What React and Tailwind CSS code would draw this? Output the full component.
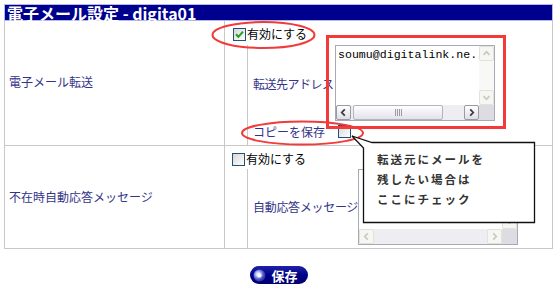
import React from 'react'

const JP = "font-['Noto_Sans_CJK_JP','Noto_Sans',sans-serif]"

function Check({ checked }) {
  return (
    <span className="inline-flex w-[13px] h-[13px] shrink-0 items-center justify-center border border-[#1c5180] bg-linear-to-br from-[#d8d8d2] to-white">
      {checked && (
        <svg width="9" height="9" viewBox="0 0 9 9">
          <path d="M1 4.3 L3.4 6.8 L8 1.6" stroke="#22a022" strokeWidth="2" fill="none" />
        </svg>
      )}
    </span>
  )
}

// scroll bar arrow button, 15x15
function SBtn({ dir, on }) {
  const pts = {
    up: '4,9 7.5,5.5 11,9',
    down: '4,6 7.5,9.5 11,6',
    left: '9,4 5.5,7.5 9,11',
    right: '6,4 9.5,7.5 6,11',
  }[dir]
  return (
    <div
      className={
        'w-[15px] h-[15px] shrink-0 rounded-[2px] border flex items-center justify-center ' +
        (on ? 'border-[#9a9aa6] bg-linear-to-b from-white to-[#dedee6]' : 'border-[#e2e2dc] bg-[#f6f6f2]')
      }
    >
      <svg width="15" height="15" viewBox="0 0 15 15">
        <polyline points={pts} fill="none" stroke={on ? '#3a3a3a' : '#cacac4'} strokeWidth="2" />
      </svg>
    </div>
  )
}

function FakeTextarea({ w, text, active }) {
  return (
    <div className={'h-[76px] border border-[#a6abb3] bg-white flex flex-col shrink-0 ' + w}>
      <div className="flex flex-1 min-h-0">
        <div className="flex-1 pl-[2px] pt-[2px] font-['Liberation_Mono',monospace] text-[11.6px] leading-[14px] text-black whitespace-nowrap overflow-hidden">
          {text}
        </div>
        <div className="w-[15px] flex flex-col bg-[#f8f8f6]">
          <SBtn dir="up" on={false} />
          <div className="flex-1" />
          <SBtn dir="down" on={false} />
        </div>
      </div>
      <div className="h-[15px] flex">
        <div className="flex-1 flex bg-[#eeeef2]">
          <SBtn dir="left" on={active} />
          {active ? (
            <div className="ml-[2px] w-[90px] h-[15px] rounded-[2px] border border-[#b4b4c0] bg-linear-to-b from-white to-[#e2e2ea] flex items-center justify-center gap-[1px]">
              <span className="w-px h-[7px] bg-[#9a9aa6]" />
              <span className="w-px h-[7px] bg-[#9a9aa6]" />
              <span className="w-px h-[7px] bg-[#9a9aa6]" />
              <span className="w-px h-[7px] bg-[#9a9aa6]" />
            </div>
          ) : null}
          <div className="flex-1" />
          <SBtn dir="right" on={active} />
        </div>
        <div className="w-[15px] bg-[#dcdce2]" />
      </div>
    </div>
  )
}

export default function App() {
  return (
    <div className={'relative w-[557px] h-[292px] bg-white overflow-hidden pt-[4px] pl-[4px] ' + JP}>
      {/* title bar */}
      <div className="w-[549px] h-[17px] bg-[#00008f] border border-[#b8b8e8] flex items-center pl-[2px] text-white text-[16px] font-bold leading-none whitespace-pre">
        電子メール設定 - digita01
      </div>

      <div className="w-[549px] border-x border-b border-[#c8c8c8] text-[12px] leading-none">
        {/* forwarding */}
        <div className="grid grid-cols-[220px_1fr] h-[125px] border-b border-[#c8c8c8]">
          <div className="border-r border-[#c8c8c8] flex items-center pl-[4px] pb-[3px] text-[#333388]">電子メール転送</div>
          <div className="flex flex-col">
            <div className="h-[24px] pt-[2px] pl-[8px] flex items-center gap-[1px] text-black">
              <Check checked />
              <span>有効にする</span>
            </div>
            <div className="ml-[22px] flex-1 border-l border-[#c8c8c8] flex flex-col">
              <div className="flex items-center">
                <div className="w-[87px] pl-[5px] pt-[1px] text-[#333388] whitespace-nowrap tracking-[-0.5px]">転送先アドレス</div>
                <FakeTextarea w="w-[160px]" text="soumu@digitalink.ne." active />
              </div>
              <div className="flex items-center mt-[4px]">
                <div className="w-[90px] pl-[5px] text-[#333388]">コピーを保存</div>
                <Check />
              </div>
            </div>
          </div>
        </div>

        {/* auto reply */}
        <div className="grid grid-cols-[220px_1fr] h-[102px]">
          <div className="border-r border-[#c8c8c8] flex items-center pl-[4px] text-[#333388]">不在時自動応答メッセージ</div>
          <div className="flex flex-col">
            <div className="h-[23px] pt-[3px] pl-[7px] flex items-center gap-[1px] text-black">
              <Check />
              <span>有効にする</span>
            </div>
            <div className="ml-[22px] flex-1 border-l border-[#c8c8c8] flex items-start">
              <div className="w-[110px] pl-[5px] self-center pb-[4px] text-[#333388] whitespace-nowrap tracking-[-0.3px]">自動応答メッセージ</div>
              <FakeTextarea w="w-[160px]" text="" active={false} />
            </div>
          </div>
        </div>
      </div>

      {/* save button */}
      <div className="w-[549px] mt-[17px] flex justify-center">
        <button className="w-[58px] h-[18px] rounded-full bg-linear-to-b from-[#2020a8] via-[#00008a] to-[#000070] flex items-center pl-[3px] gap-[3px] text-white text-[13px] font-bold leading-none">
          <svg width="13" height="13" viewBox="0 0 13 13">
            <defs>
              <radialGradient id="orb" cx="0.4" cy="0.4" r="0.6">
                <stop offset="0" stopColor="#ffffff" />
                <stop offset="0.3" stopColor="#c8ccff" />
                <stop offset="0.7" stopColor="#5058c8" />
                <stop offset="1" stopColor="#28309a" />
              </radialGradient>
            </defs>
            <circle cx="6.5" cy="6.5" r="6" fill="url(#orb)" />
            <circle cx="6.5" cy="6.5" r="2" fill="#ffffff" />
          </svg>
          <span className="pl-[3px]">保存</span>
        </button>
      </div>

      {/* annotations */}
      <svg className="absolute left-0 top-0 pointer-events-none" width="557" height="292">
        <ellipse cx="263.5" cy="35" rx="51" ry="13" fill="none" stroke="#f23a3a" strokeWidth="2" />
        <rect x="327.5" y="36.5" width="177" height="91" fill="none" stroke="#f23a3a" strokeWidth="3" />
        <ellipse cx="302.5" cy="133" rx="60.5" ry="11.5" fill="none" stroke="#f23a3a" strokeWidth="2" />
        <path
          d="M372 142.5 L534.5 142.5 L534.5 222.5 L363.5 222.5 L363.5 148 L352 136 Z"
          fill="#ffffff"
          stroke="#111111"
          strokeWidth="1.3"
        />
      </svg>
      <div className="absolute left-[377px] top-[152px] flex flex-col gap-[6px] text-[11.5px] leading-[14px] font-bold tracking-[2px] text-[#333333]">
        <span>転送元にメールを</span>
        <span>残したい場合は</span>
        <span>ここにチェック</span>
      </div>
    </div>
  )
}
